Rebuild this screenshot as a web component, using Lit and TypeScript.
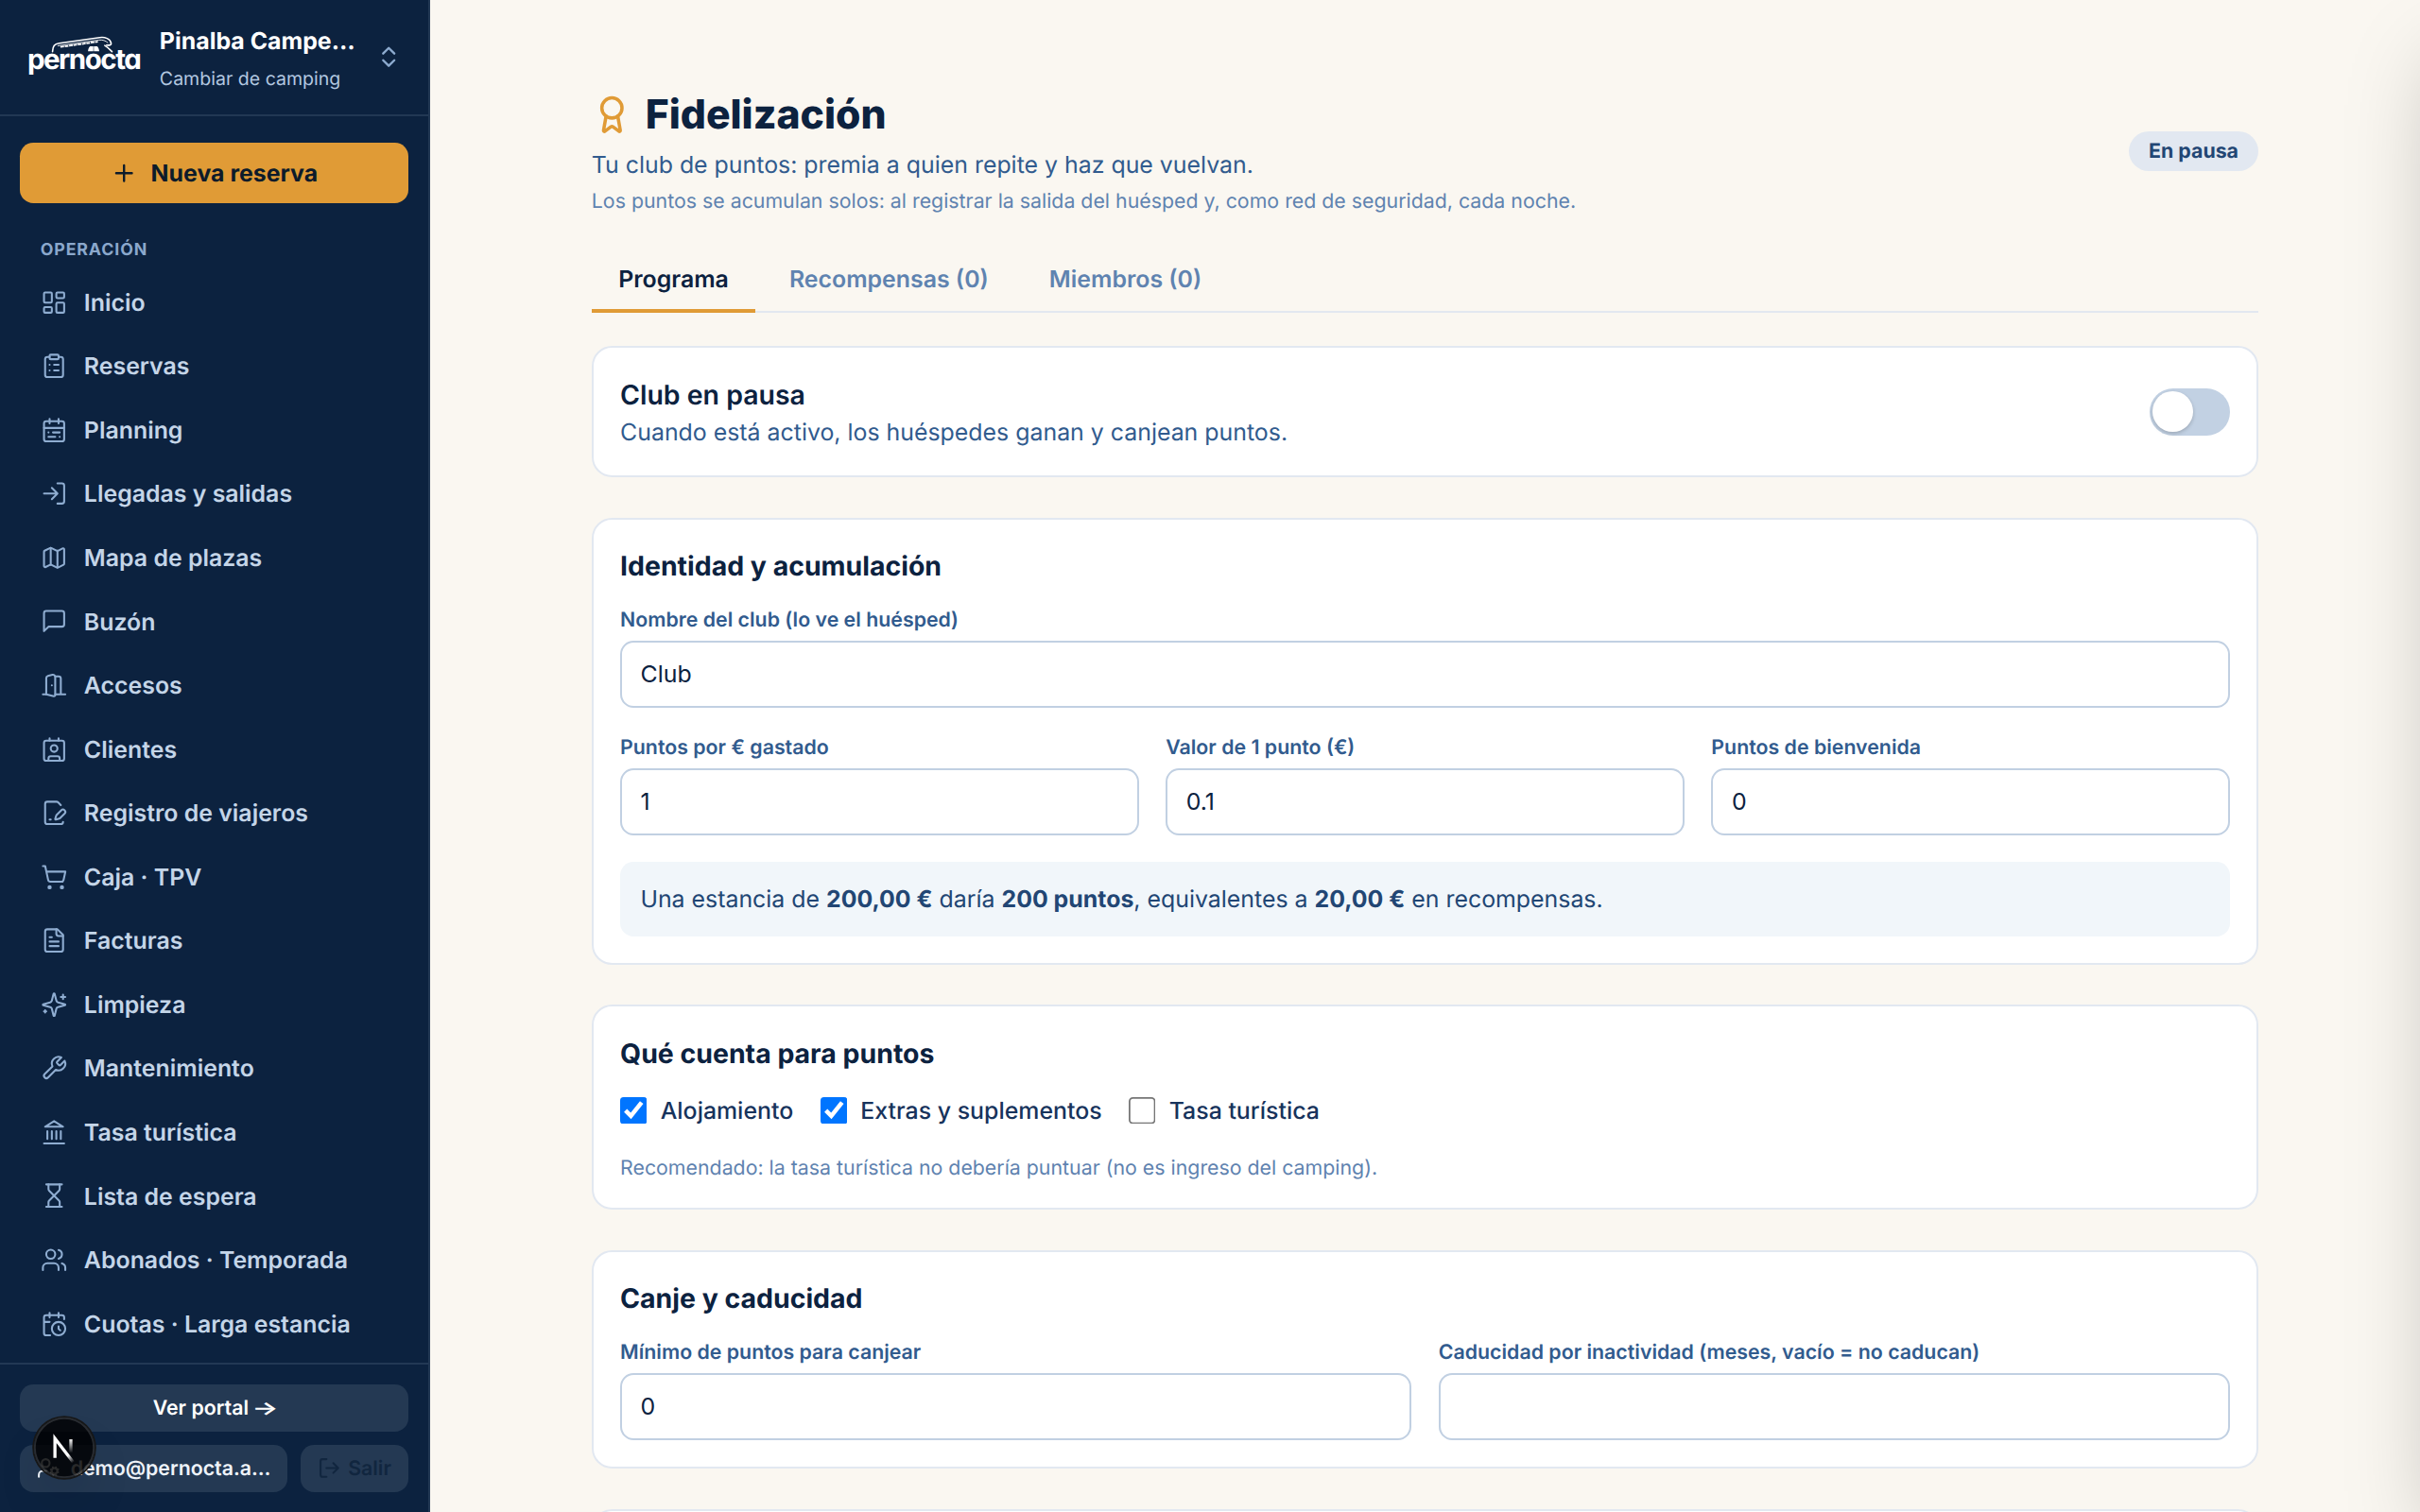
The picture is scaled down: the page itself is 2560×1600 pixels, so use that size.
import { LitElement, html, css, svg } from "lit";
import type { SVGTemplateResult } from "lit";
import { customElement, property } from "lit/decorators.js";

const ICONS: Record<string, SVGTemplateResult> = {
  dashboard: svg`<rect width="7" height="9" x="3" y="3" rx="1"/><rect width="7" height="5" x="14" y="3" rx="1"/><rect width="7" height="9" x="14" y="12" rx="1"/><rect width="7" height="5" x="3" y="16" rx="1"/>`,
  clipboard: svg`<rect width="8" height="4" x="8" y="2" rx="1"/><path d="M16 4h2a2 2 0 0 1 2 2v14a2 2 0 0 1-2 2H6a2 2 0 0 1-2-2V6a2 2 0 0 1 2-2h2"/><path d="M12 11h4M12 16h4M8 11h.01M8 16h.01"/>`,
  calendarRange: svg`<rect width="18" height="18" x="3" y="4" rx="2"/><path d="M16 2v4M3 10h18M8 2v4M17 14h-6M13 18H7M7 14h.01M17 18h.01"/>`,
  logIn: svg`<path d="m10 17 5-5-5-5M15 12H3M15 3h4a2 2 0 0 1 2 2v14a2 2 0 0 1-2 2h-4"/>`,
  map: svg`<path d="M14.106 5.553a2 2 0 0 0 1.788 0l3.659-1.83A1 1 0 0 1 21 4.619v12.764a1 1 0 0 1-.553.894l-4.553 2.277a2 2 0 0 1-1.788 0l-4.212-2.106a2 2 0 0 0-1.788 0l-3.659 1.83A1 1 0 0 1 3 19.381V6.618a1 1 0 0 1 .553-.894l4.553-2.277a2 2 0 0 1 1.788 0z"/><path d="M15 5.764v15M9 3.236v15"/>`,
  message: svg`<path d="M21 15a2 2 0 0 1-2 2H7l-4 4V5a2 2 0 0 1 2-2h14a2 2 0 0 1 2 2z"/>`,
  door: svg`<path d="M13 4h3a2 2 0 0 1 2 2v14M2 20h3M13 20h9M10 12v.01"/><path d="M13 4.562v16.157a1 1 0 0 1-1.242.97L5 20V5.562a2 2 0 0 1 1.515-1.94l4-1A2 2 0 0 1 13 4.561Z"/>`,
  contact: svg`<path d="M16 2v2M8 2v2M7 22v-2a2 2 0 0 1 2-2h6a2 2 0 0 1 2 2v2"/><circle cx="12" cy="11" r="3"/><rect x="3" y="4" width="18" height="18" rx="2"/>`,
  filePen: svg`<path d="m18 5-2.414-2.414A2 2 0 0 0 14.172 2H6a2 2 0 0 0-2 2v16a2 2 0 0 0 2 2h12a2 2 0 0 0 2-2"/><path d="M21.378 12.626a1 1 0 0 0-3.004-3.004l-4.01 4.012a2 2 0 0 0-.506.854l-.837 2.87a.5.5 0 0 0 .62.62l2.87-.837a2 2 0 0 0 .854-.506z"/><path d="M8 18h1"/>`,
  cart: svg`<circle cx="8" cy="21" r="1"/><circle cx="19" cy="21" r="1"/><path d="M2.05 2.05h2l2.66 12.42a2 2 0 0 0 2 1.58h9.78a2 2 0 0 0 1.95-1.57l1.65-7.43H5.12"/>`,
  fileText: svg`<path d="M15 2H6a2 2 0 0 0-2 2v16a2 2 0 0 0 2 2h12a2 2 0 0 0 2-2V7Z"/><path d="M14 2v4a2 2 0 0 0 2 2h4M10 9H8M16 13H8M16 17H8"/>`,
  sparkles: svg`<path d="M9.937 15.5A2 2 0 0 0 8.5 14.063l-6.135-1.582a.5.5 0 0 1 0-.962L8.5 9.936A2 2 0 0 0 9.937 8.5l1.582-6.135a.5.5 0 0 1 .963 0L14.063 8.5A2 2 0 0 0 15.5 9.937l6.135 1.581a.5.5 0 0 1 0 .964L15.5 14.063a2 2 0 0 0-1.437 1.437l-1.582 6.135a.5.5 0 0 1-.963 0z"/><path d="M20 3v4M22 5h-4M4 17v2M5 18H3"/>`,
  wrench: svg`<path d="M14.7 6.3a1 1 0 0 0 0 1.4l1.6 1.6a1 1 0 0 0 1.4 0l3.77-3.77a6 6 0 0 1-7.94 7.94l-6.91 6.91a2.12 2.12 0 0 1-3-3l6.91-6.91a6 6 0 0 1 7.94-7.94l-3.76 3.76z"/>`,
  landmark: svg`<path d="M3 22h18M6 18v-7M10 18v-7M14 18v-7M18 18v-7"/><path d="m12 2 8 5H4z"/>`,
  hourglass: svg`<path d="M5 22h14M5 2h14"/><path d="M17 22v-4.172a2 2 0 0 0-.586-1.414L12 12l-4.414 4.414A2 2 0 0 0 7 17.828V22"/><path d="M7 2v4.172a2 2 0 0 0 .586 1.414L12 12l4.414-4.414A2 2 0 0 0 17 6.172V2"/>`,
  users: svg`<path d="M16 21v-2a4 4 0 0 0-4-4H6a4 4 0 0 0-4 4v2"/><circle cx="9" cy="7" r="4"/><path d="M22 21v-2a4 4 0 0 0-3-3.87M16 3.13a4 4 0 0 1 0 7.75"/>`,
  calendarClock: svg`<path d="M21 7.5V6a2 2 0 0 0-2-2H5a2 2 0 0 0-2 2v14a2 2 0 0 0 2 2h3.5M16 2v4M8 2v4M3 10h5M17.5 17.5 16 16.3V14"/><circle cx="16" cy="16" r="6"/>`,
  userCog: svg`<circle cx="18" cy="15" r="3"/><circle cx="9" cy="7" r="4"/><path d="M10 15H6a4 4 0 0 0-4 4v2m19.7-4.6-.9-.3m-5.6-2.2-.9-.3m2.3 5.1.3-.9m2.2-5.6.3-.9m.2 7.4-.4-1m-2.4-5.4-.4-1m-2.1 5.3 1-.4m5.4-2.4 1-.4"/>`,
  logOut: svg`<path d="M9 21H5a2 2 0 0 1-2-2V5a2 2 0 0 1 2-2h4M16 17l5-5-5-5M21 12H9"/>`,
  chevrons: svg`<path d="m7 15 5 5 5-5M7 9l5-5 5 5"/>`,
  plus: svg`<path d="M5 12h14M12 5v14"/>`,
  award: svg`<path d="m15.477 12.89 1.515 8.526a.5.5 0 0 1-.81.47l-3.58-2.687a1 1 0 0 0-1.197 0l-3.586 2.686a.5.5 0 0 1-.81-.469l1.514-8.526"/><circle cx="12" cy="8" r="6"/>`,
};

const NAV: [string, string][] = [
  ["dashboard", "Inicio"],
  ["clipboard", "Reservas"],
  ["calendarRange", "Planning"],
  ["logIn", "Llegadas y salidas"],
  ["map", "Mapa de plazas"],
  ["message", "Buzón"],
  ["door", "Accesos"],
  ["contact", "Clientes"],
  ["filePen", "Registro de viajeros"],
  ["cart", "Caja · TPV"],
  ["fileText", "Facturas"],
  ["sparkles", "Limpieza"],
  ["wrench", "Mantenimiento"],
  ["landmark", "Tasa turística"],
  ["hourglass", "Lista de espera"],
  ["users", "Abonados · Temporada"],
  ["calendarClock", "Cuotas · Larga estancia"],
];

@customElement("line-icon")
export class LineIcon extends LitElement {
  @property() name = "";
  @property({ type: Number }) weight = 2;

  static styles = css`
    :host { display: block; flex: none; width: 16px; height: 16px; }
    .glyph { display: block; width: 100%; height: 100%; overflow: visible; }
  `;

  render() {
    return html`<svg class="glyph" viewBox="0 0 24 24" fill="none" stroke="currentColor"
      stroke-width=${this.weight} stroke-linecap="round" stroke-linejoin="round">${ICONS[this.name]}</svg>`;
  }
}

@customElement("side-bar")
export class SideBar extends LitElement {
  static styles = css`
    :host {
      display: flex; flex-direction: column; flex: none; box-sizing: border-box;
      width: 256px; height: 900px; background: #0c223f; color: #fff;
      border-right: 1.125px solid #223854;
    }
    .head {
      display: flex; align-items: center; box-sizing: border-box; height: 69px; flex: none;
      padding: 0 15.6px 0 16px; gap: 10px; border-bottom: 1.125px solid #223854;
    }
    .logo { display: block; width: 69px; height: 36px; flex: none; overflow: visible; }
    .word { font: 700 16.6px Inter, sans-serif; font-feature-settings: "cv11"; }
    .who { flex: 1; min-width: 0; display: flex; flex-direction: column; gap: 3.6px; padding-top: 1.6px; white-space: nowrap; }
    .camp { font-size: 14px; line-height: 20px; font-weight: 700; }
    .swap { font-size: 11px; line-height: 16px; color: #b3c8e0; }
    .head line-icon { color: #8dabcf; }
    .new {
      display: flex; align-items: center; justify-content: center; gap: 8px; flex: none;
      height: 36px; margin: 16px 12px 0; border-radius: 8px; background: #e09b36;
      color: #0d1b2a; font-size: 14px; font-weight: 700;
    }
    .new span { padding-top: 1px; }
    .group {
      padding: 20.6px 24px 5.4px; font-size: 10px; line-height: 15px; font-weight: 700;
      letter-spacing: 0.5px; color: #8ba8cc;
    }
    .nav { flex: 1; min-height: 0; overflow: hidden; display: flex; flex-direction: column; gap: 2px; padding: 0 12px; }
    .item {
      display: flex; align-items: center; gap: 10px; flex: none; height: 36px; padding: 0 12px;
      font-size: 14px; font-weight: 600; color: #c4d5e8; white-space: nowrap;
    }
    .item span { padding-top: 1px; }
    .item line-icon { color: #8fadd1; }
    .foot {
      display: flex; flex-direction: column; gap: 8px; flex: none; padding: 12px;
      border-top: 1.125px solid #223854; font-size: 12px; font-weight: 600; white-space: nowrap;
    }
    .btn { display: flex; align-items: center; height: 28px; border-radius: 8px; background: #243953; box-sizing: border-box; padding: 0 10px; }
    .portal { justify-content: center; gap: 3.2px; }
    .arrow {
      display: flex; justify-content: center; width: 12.8px; font-size: 11px; line-height: 16px;
      font-weight: 600; transform: scaleX(1.5);
    }
    .row { display: flex; gap: 8px; }
    .user { flex: 1; gap: 6px; color: #eef3f9; }
    .exit { width: 64px; gap: 4px; color: #11263f; }
    .btn line-icon { width: 14px; height: 14px; }
  `;

  render() {
    return html`
      <div class="head">
        <svg class="logo" viewBox="0 0 69 36" fill="none" stroke="#fff" stroke-linecap="round">
          <path d="M15.5 15c.2-3.4 1-4.6 4.1-5l24-3.4c3-.4 6.3.6 6.8 3.4.2 1.1-1.2 1.3-2.7 1.1" stroke-width=".9"/>
          <path d="M18.7 11.5 43 8.1c2.2-.3 4.2.3 5.4 1.6" stroke-width=".5"/>
          <path d="M20.2 12.2 42.5 9.1" stroke-width="1" stroke-dasharray="2.2 .4" stroke-linecap="butt"/>
          <path d="M46.6 11.3c1.4.8 2.8 2.1 4.3 3.7" stroke-width=".9"/>
          <path d="M37.8 11.8h2v3h-3.200c.1-1.300.5-2.200 1.200-3zM40.100 11.800h2c.7.8 1.100 1.700 1.200 3h-3.200z" fill="#fff" stroke="none"/>
          <text class="word" x="0.5" y="25.3" textLength="68" lengthAdjust="spacing" fill="#fff" stroke="none">pernocta</text>
        </svg>
        <div class="who">
          <div class="camp">Pinalba Campe…</div>
          <div class="swap">Cambiar de camping</div>
        </div>
        <line-icon name="chevrons"></line-icon>
      </div>
      <div class="new"><line-icon name="plus"></line-icon><span>Nueva reserva</span></div>
      <div class="group">OPERACIÓN</div>
      <div class="nav">
        ${NAV.map(([icon, label]) => html`<div class="item"><line-icon name=${icon} weight="1.75"></line-icon><span>${label}</span></div>`)}
      </div>
      <div class="foot">
        <div class="btn portal">Ver portal <span class="arrow">→</span></div>
        <div class="row">
          <div class="btn user"><line-icon name="userCog"></line-icon>demo@pernocta.a…</div>
          <div class="btn exit"><line-icon name="logOut"></line-icon>Salir</div>
        </div>
      </div>
    `;
  }
}

@customElement("text-field")
export class TextField extends LitElement {
  @property() label = "";
  @property() value = "";

  static styles = css`
    :host { display: block; min-width: 0; }
    .wrap { display: flex; flex-direction: column; gap: 4px; }
    .label { font-size: 12px; line-height: 16px; font-weight: 600; color: #315b8e; white-space: nowrap; }
    .input {
      display: block; box-sizing: border-box; width: 100%; height: 40px; margin: 0; padding: 0 11px;
      border: 1.125px solid #c1d0e2; border-radius: 8px; background: #fff; color: #0c223f;
      font: 400 14px/20px Inter, sans-serif; outline: none;
    }
  `;

  render() {
    return html`<label class="wrap"><span class="label">${this.label}</span><input class="input" type="text" .value=${this.value} /></label>`;
  }
}

@customElement("app-root")
export class AppRoot extends LitElement {
  static styles = css`
    :host {
      display: block; position: relative; width: 1440px; height: 900px; overflow: hidden;
      zoom: 1.7777778; background: #faf7f1; color: #0c223f;
      font-family: Inter, "Liberation Sans", sans-serif; text-rendering: geometricPrecision;
      -webkit-font-smoothing: antialiased;
    }
    .shell { display: flex; height: 900px; }
    .main { flex: 1; min-width: 0; height: 900px; overflow: hidden; }
    .page { width: 992px; margin: 0 auto; padding-top: 52px; }
    .top { display: flex; align-items: center; justify-content: space-between; margin-bottom: 20px; }
    .title { display: flex; align-items: center; gap: 8px; margin: 0; font-size: 24px; line-height: 32px; font-weight: 800; }
    .title span { padding-top: 0.6px; margin-bottom: -0.6px; }
    .title line-icon { width: 24px; height: 24px; color: #e09b36; }
    .lead { margin: 4.8px 0 0; font-size: 14px; line-height: 20px; color: #315b8e; }
    .note { margin: 3.2px 0 0; font-size: 12px; line-height: 16px; color: #5f83b0; }
    .state { padding: 4px 12px; border-radius: 12px; background: #e2e8f1; color: #224674; font-size: 12px; line-height: 16px; font-weight: 700; }
    .tabs { display: flex; gap: 4px; height: 37px; border-bottom: 1.125px solid #e2e8f0; margin-bottom: 20px; box-sizing: content-box; }
    .tab { padding: 9px 16px 0; height: 27px; font-size: 14px; line-height: 20px; font-weight: 600; color: #5f83b0; }
    .on { color: #0c223f; border-bottom: 2.25px solid #e09b36; }
    .card { box-sizing: border-box; background: #fff; border: 1.125px solid #e2e8f1; border-radius: 12px; padding: 16px 15.9px; margin-bottom: 24px; }
    .club { display: flex; align-items: center; justify-content: space-between; height: 78px; }
    .h { margin: 0; font-size: 16px; line-height: 24px; font-weight: 600; }
    .strong { font-weight: 700; margin-bottom: 12px; }
    .flat { margin: 0; }
    .sub { margin: 0.8px 0 -0.8px; }
    .switch { box-sizing: border-box; width: 48px; height: 28px; border-radius: 14px; padding: 2px; background: #c2d1e3; }
    .knob { width: 24px; height: 24px; border-radius: 50%; background: #fff; box-shadow: 0 1px 3px rgba(0, 0, 0, .1), 0 1px 2px rgba(0, 0, 0, .1); }
    .three { display: grid; grid-template-columns: repeat(3, 1fr); gap: 16px; margin: 16px 0; }
    .two { display: grid; grid-template-columns: repeat(2, 1fr); gap: 16px; }
    .info { padding: 12.5px 12px 11.5px; border-radius: 8px; background: #f1f6fa; color: #224674; font-size: 14px; line-height: 20px; }
    .info b { font-weight: 700; }
    .checks { display: flex; gap: 16px; margin-bottom: 16px; }
    .check { display: flex; align-items: center; gap: 8px; font-size: 14px; line-height: 20px; font-weight: 500; color: #17335c; }
    .check span { padding-top: 0.6px; margin-bottom: -0.6px; }
    .box { width: 16.4px; height: 16.4px; margin: 0 -0.4px 0 0; }
    .identity { height: 266px; }
    .counts { height: 122px; }
    .redeem { height: 130px; }
    .drawer { position: absolute; left: 1440px; top: 0; width: 448px; height: 900px; box-shadow: 0 25px 50px -12px rgba(0, 0, 0, .25); }
    .dev {
      position: absolute; left: 20px; top: 844px; width: 36px; height: 36px; border-radius: 50%;
      background: rgba(0, 0, 0, .83);
      box-shadow: 0 0 0 1px #171717, inset 0 0 0 1px rgba(255, 255, 255, .14), 0 16px 32px -8px rgba(0, 0, 0, .24);
    }
    .mark { display: block; width: 36px; height: 36px; }
  `;

  render() {
    return html`
      <div class="shell">
        <side-bar></side-bar>
        <div class="main">
          <div class="page">
            <div class="top">
              <div>
                <h1 class="title"><line-icon name="award"></line-icon><span>Fidelización</span></h1>
                <p class="lead">Tu club de puntos: premia a quien repite y haz que vuelvan.</p>
                <p class="note">Los puntos se acumulan solos: al registrar la salida del huésped y, como red de seguridad, cada noche.</p>
              </div>
              <div class="state">En pausa</div>
            </div>
            <div class="tabs">
              <div class="tab on">Programa</div>
              <div class="tab">Recompensas (0)</div>
              <div class="tab">Miembros (0)</div>
            </div>

            <div class="card club">
              <div>
                <h2 class="h">Club en pausa</h2>
                <p class="lead sub">Cuando está activo, los huéspedes ganan y canjean puntos.</p>
              </div>
              <div class="switch"><div class="knob"></div></div>
            </div>

            <div class="card identity">
              <h2 class="h strong">Identidad y acumulación</h2>
              <text-field label="Nombre del club (lo ve el huésped)" value="Club"></text-field>
              <div class="three">
                <text-field label="Puntos por € gastado" value="1"></text-field>
                <text-field label="Valor de 1 punto (€)" value="0.1"></text-field>
                <text-field label="Puntos de bienvenida" value="0"></text-field>
              </div>
              <div class="info">Una estancia de <b>200,00 €</b> daría <b>200 puntos</b>, equivalentes a <b>20,00 €</b> en recompensas.</div>
            </div>

            <div class="card counts">
              <h2 class="h strong">Qué cuenta para puntos</h2>
              <div class="checks">
                <label class="check"><input class="box" type="checkbox" checked /><span>Alojamiento</span></label>
                <label class="check"><input class="box" type="checkbox" checked /><span>Extras y suplementos</span></label>
                <label class="check"><input class="box" type="checkbox" /><span>Tasa turística</span></label>
              </div>
              <p class="note flat">Recomendado: la tasa turística no debería puntuar (no es ingreso del camping).</p>
            </div>

            <div class="card redeem">
              <h2 class="h strong">Canje y caducidad</h2>
              <div class="two">
                <text-field label="Mínimo de puntos para canjear" value="0"></text-field>
                <text-field label="Caducidad por inactividad (meses, vacío = no caducan)"></text-field>
              </div>
            </div>

            <div class="card redeem"></div>
          </div>
        </div>
      </div>
      <div class="drawer"></div>
      <div class="dev">
        <svg class="mark" viewBox="0 0 36 36" fill="none">
          <defs>
            <linearGradient id="diag" x1="9.96" y1="11.12" x2="15.48" y2="17.97" gradientUnits="userSpaceOnUse">
              <stop stop-color="#fff"/><stop offset=".604" stop-color="#fff" stop-opacity="0"/>
            </linearGradient>
            <linearGradient id="stem" x1="11.82" y1="1.4" x2="11.79" y2="9.63" gradientUnits="userSpaceOnUse">
              <stop stop-color="#fff"/><stop offset="1" stop-color="#fff" stop-opacity="0"/>
            </linearGradient>
          </defs>
          <g transform="translate(10.1 11.5)" stroke-width="1.86">
            <path d="M13.3 15.2 2.34 1v11.6" stroke="url(#diag)"/>
            <path d="M11.825 1.5v11.6" stroke="url(#stem)"/>
          </g>
        </svg>
      </div>
    `;
  }
}
